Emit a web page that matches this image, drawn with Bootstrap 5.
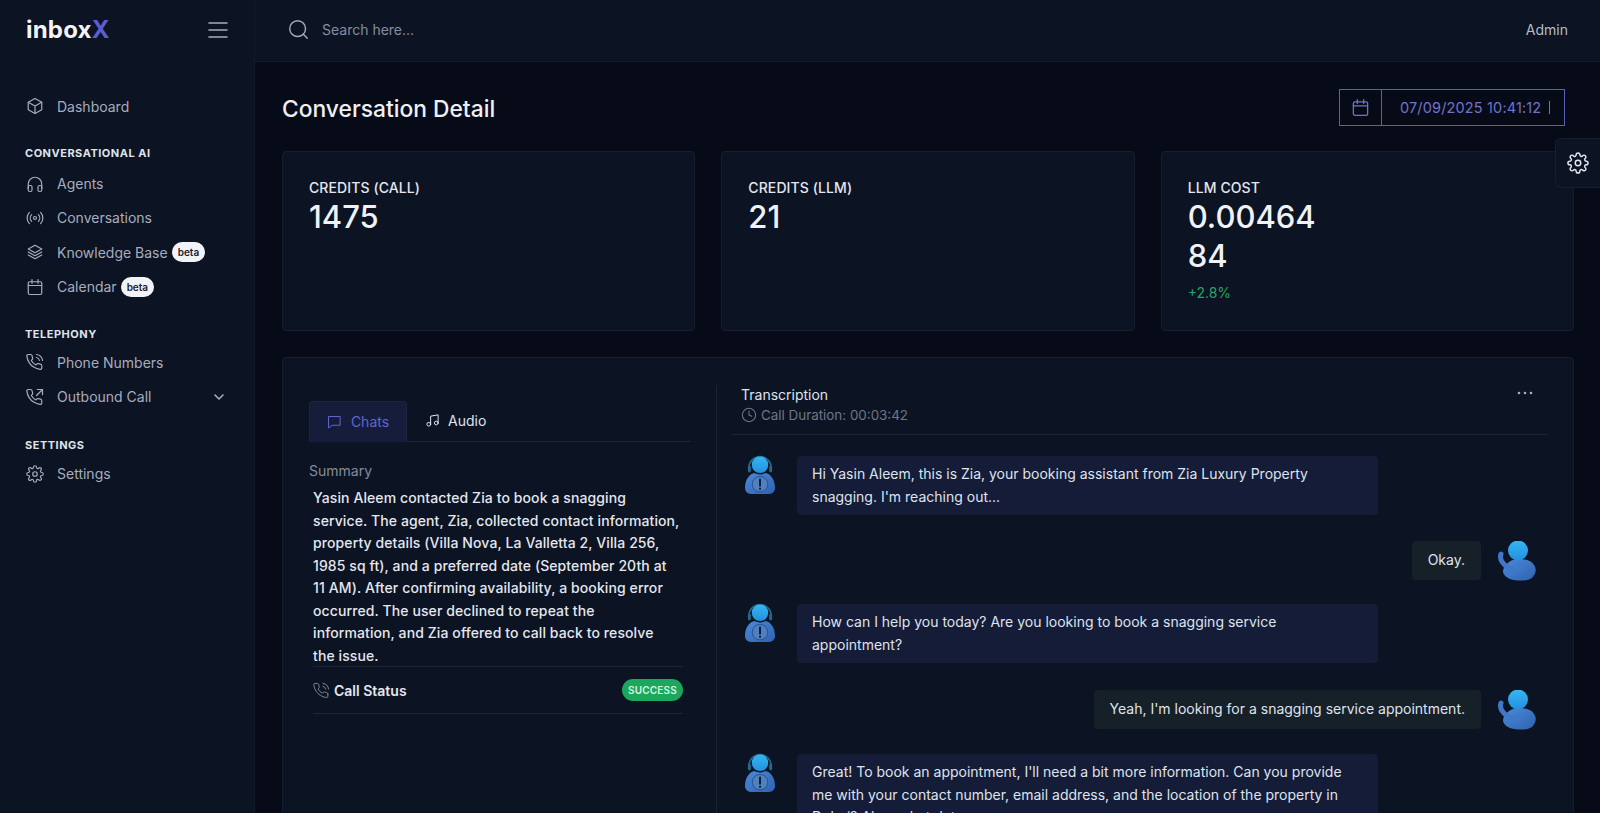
<!DOCTYPE html>
<html lang="en">
<head>
  <meta charset="UTF-8">
  <title>Conversation Detail</title>
  <meta name="viewport" content="width=device-width, initial-scale=1">
  <link href="https://cdn.jsdelivr.net/npm/bootstrap@5.3.3/dist/css/bootstrap.min.css" rel="stylesheet">
  <style>
    html, body {
      height: 100%;
      overflow: hidden;
    }
    body {
      background-color: #070b18;
      color: #e4e7ef;
      font-family: Inter, "Noto Sans", sans-serif;
      font-size: 14px;
    }
    svg.ico {
      fill: none;
      stroke: currentColor;
      stroke-width: 1.6;
      stroke-linecap: round;
      stroke-linejoin: round;
      flex: none;
    }
    .side-panel {
      width: 255px;
      flex: none;
      height: 813px;
      background-color: #0c1323;
      border-right: 1px solid #131a2b;
    }
    .side-top {
      height: 62px;
      padding: 0 26px 2px 26px;
    }
    .brand-text {
      font-size: 24px;
      font-weight: 700;
      color: #f2f4f8;
      letter-spacing: .2px;
    }
    .brand-text span {
      color: #5a5fd0;
    }
    .side-nav {
      padding: 27px 25px 0 26px;
    }
    .side-link {
      height: 34.4px;
      color: #a6adbe;
      gap: 13px;
    }
    .side-head {
      font-size: 11px;
      font-weight: 700;
      letter-spacing: .5px;
      color: #dfe3ec;
      height: 16px;
      line-height: 16px;
      margin-left: -1px;
    }
    .beta-pill {
      background-color: #f1f3f7;
      color: #1b2130;
      font-size: 10px;
      font-weight: 600;
      border-radius: 10px;
      padding: 3px 6px;
      line-height: 14px;
      margin-left: -9px;
    }
    .chev-end {
      margin-right: 4px;
    }
    .top-strip {
      height: 62px;
      background-color: #0c1323;
      border-bottom: 1px solid #131a2b;
      padding: 0 32px 2px 33px;
    }
    .search-hint {
      color: #868d9e;
      margin-left: 13px;
    }
    .admin-name {
      color: #b6bbc8;
    }
    .page-area {
      padding: 27px 26px 0 27px;
    }
    .page-title {
      font-size: 22.800px;
      font-weight: 500;
      color: #eef0f5;
      margin: 0;
      padding-top: 2px;
    }
    .date-box {
      border: 1px solid #5a60b8;
      height: 37px;
      margin-right: 9px;
      color: #6f74c8;
    }
    .date-icon {
      width: 42px;
      border-right: 1px solid #5a60b8;
    }
    .date-value {
      width: 182px;
      padding-left: 18px;
      font-size: 14.500px;
      letter-spacing: .15px;
    }
    .date-caret {
      display: inline-block;
      width: 1px;
      height: 13px;
      margin-left: 8px;
      background-color: #6f74c8;
      vertical-align: -1px;
    }
    .gear-tab {
      position: absolute;
      top: 138px;
      right: 0;
      width: 45px;
      height: 50px;
      background-color: #0c1323;
      border: 1px solid #161e30;
      border-right: 0;
      border-radius: 6px 0 0 6px;
      color: #e4e7ef;
    }
    .stat-row {
      display: grid;
      grid-template-columns: repeat(3, 1fr);
      gap: 26px;
      margin-top: 25px;
    }
    .stat-box {
      height: 180px;
      background-color: #0c1323;
      border: 1px solid #161e30;
      border-radius: 4px;
      padding: 26px 26px 0;
    }
    .stat-label {
      font-size: 14px;
      font-weight: 500;
      line-height: 19px;
      letter-spacing: .1px;
      color: #e4e7ef;
    }
    .stat-value {
      margin-top: 1px;
      font-size: 31px;
      font-weight: 500;
      line-height: 38.500px;
      color: #f0f2f6;
      width: 140px;
      word-break: break-all;
    }
    .stat-delta {
      color: #25a565;
      margin-top: 7px;
      font-size: 14px;
    }
    .detail-box {
      margin-top: 26px;
      height: 600px;
      background-color: #0c1323;
      border: 1px solid #161e30;
      border-radius: 4px 4px 0 0;
      padding: 27px 26px 0;
    }
    .left-pane {
      width: 408px;
      flex: none;
      padding-right: 25px;
      border-right: 1px solid #1a2234;
      height: 500px;
    }
    .tab-line {
      border-bottom: 1px solid #1c2436;
      margin-top: 16px;
      height: 41px;
    }
    .tab-active {
      width: 98px;
      height: 41px;
      padding-bottom: 2px;
      background-color: #151d3a;
      border: 1px solid #1c2540;
      border-bottom: 0;
      border-radius: 4px 4px 0 0;
      color: #5f66cf;
      gap: 9px;
    }
    .tab-plain {
      height: 41px;
      padding: 0 0 2px 18px;
      color: #dfe3ec;
      gap: 8px;
    }
    .summary-label {
      margin-top: 20px;
      color: #858c9c;
      line-height: 18px;
    }
    .summary-text {
      margin: 7px 0 0;
      padding: 0 0 0 4px;
      font-weight: 500;
      letter-spacing: .1px;
      line-height: 22.500px;
      white-space: nowrap;
      color: #e4e7ef;
    }
    .status-row {
      margin: -1px 8px 0 4px;
      height: 48px;
      border-top: 1px solid #1c2436;
      border-bottom: 1px solid #1c2436;
      color: #e4e7ef;
      font-weight: 600;
    }
    .status-pill {
      background-color: #1aa85c;
      color: #d5f3e2;
      font-size: 10px;
      font-weight: 600;
      letter-spacing: .2px;
      border-radius: 11px;
      padding: 4px 6px;
      line-height: 14px;
    }
    .right-pane {
      padding-left: 14px;
      flex-grow: 1;
      min-width: 0;
    }
    .trans-head {
      padding: 0 14px 9px 10px;
      border-bottom: 1px solid #1a2234;
    }
    .trans-title {
      line-height: 20px;
      color: #dfe3ec;
    }
    .trans-sub {
      color: #6f7686;
      font-size: 13.400px;
      line-height: 20px;
      gap: 4px;
    }
    .chat-line {
      gap: 21px;
      padding: 0 10px 0 14px;
    }
    .chat-line.is-user {
      gap: 16px;
    }
    .bot-face {
      margin-top: -2px;
      flex: none;
    }
    .chat-bubble {
      background-color: #141c38;
      border-radius: 4px;
      padding: 7px 15px;
      line-height: 22.500px;
      width: 581px;
      color: #dfe3ec;
    }
    .chat-bubble.from-user {
      background-color: #162029;
      width: auto;
      padding: 8px 16px;
    }
  </style>
</head>
<body>
  <svg width="0" height="0" class="d-block">
    <defs>
      <linearGradient id="headFill" x1="0" y1="0" x2="0" y2="1">
        <stop offset="0" stop-color="#35b6f2"/>
        <stop offset="1" stop-color="#2390e0"/>
      </linearGradient>
      <linearGradient id="bodyFill" x1="0" y1="0" x2="1" y2="1">
        <stop offset="0" stop-color="#4a8ad8"/>
        <stop offset="1" stop-color="#2f62b0"/>
      </linearGradient>
      <symbol id="botFace" viewBox="0 0 32 42">
        <path d="M4 14a11.500 11.500 0 0 1 23 0" fill="none" stroke="#24688c" stroke-width="1.800"/>
        <rect x="3" y="12" width="3" height="7" rx="1.500" fill="#24688c"/>
        <rect x="25" y="12" width="3" height="7" rx="1.500" fill="#24688c"/>
        <circle cx="15.500" cy="11" r="8.500" fill="url(#headFill)"/>
        <path d="M0 35c0-9 5-15 10-15.500 3 2 8 2 11 0 5 .5 10 6.500 10 15.500 0 4-3 6-6 6H6c-3 0-6-2-6-6z" fill="url(#bodyFill)"/>
        <circle cx="15.500" cy="31" r="8" fill="#4f80c0" stroke="#2b4f88"/>
        <path d="M15.500 26v6.500M15.500 35.500v.5" stroke="#0f1b33" stroke-width="2" stroke-linecap="round"/>
      </symbol>
      <symbol id="userFace" viewBox="0 0 40 40">
        <path d="M9 24c3-4 8-6 13-6 6 0 12 1 15 6 3 4 2 9-2 13-5 3-12 3-18 2-6-1-10-4-11-8 0-3 1-5 3-7z" fill="url(#bodyFill)"/>
        <path d="M4 13c-2 5 2 11 8 14l10 2" fill="none" stroke="#3f78c8" stroke-width="5" stroke-linecap="round"/>
        <circle cx="21" cy="9.500" r="10" fill="url(#headFill)"/>
      </symbol>
    </defs>
  </svg>

  <div class="d-flex">
    <aside class="side-panel">
      <div class="side-top d-flex align-items-center justify-content-between">
        <div class="brand-text">inbox<span>X</span></div>
        <svg class="ico" width="20" height="20" viewBox="0 0 20 20" style="color:#a6adbe"><path d="M1 3h18M1 10h18M1 17h18"/></svg>
      </div>
      <nav class="side-nav">
        <div class="side-link d-flex align-items-center">
          <svg class="ico" width="18" height="18" viewBox="0 0 24 24"><path d="M12 2l9 5v10l-9 5-9-5V7z"/><path d="M3 7l9 5 9-5M12 12v10"/></svg>
          <span>Dashboard</span>
        </div>
        <div class="side-head" style="margin-top:22px">CONVERSATIONAL AI</div>
        <div class="side-link d-flex align-items-center" style="margin-top:5px">
          <svg class="ico" width="18" height="18" viewBox="0 0 24 24"><path d="M3 18v-6a9 9 0 0 1 18 0v6"/><rect x="3" y="14" width="5" height="8" rx="2"/><rect x="16" y="14" width="5" height="8" rx="2"/></svg>
          <span>Agents</span>
        </div>
        <div class="side-link d-flex align-items-center">
          <svg class="ico" width="18" height="18" viewBox="0 0 24 24"><circle cx="12" cy="12" r="2"/><path d="M7.500 7.500a6.500 6.500 0 0 0 0 9M16.500 7.500a6.500 6.500 0 0 1 0 9M4.500 4.500a11 11 0 0 0 0 15M19.500 4.500a11 11 0 0 1 0 15"/></svg>
          <span>Conversations</span>
        </div>
        <div class="side-link d-flex align-items-center">
          <svg class="ico" width="18" height="18" viewBox="0 0 24 24"><path d="M12 3l9 5-9 5-9-5z"/><path d="M3 12l9 5 9-5M3 16l9 5 9-5"/></svg>
          <span>Knowledge Base</span>
          <span class="beta-pill">beta</span>
        </div>
        <div class="side-link d-flex align-items-center">
          <svg class="ico" width="18" height="18" viewBox="0 0 24 24"><rect x="3" y="5" width="18" height="17" rx="2"/><path d="M3 10h18M8 2v5M16 2v5"/></svg>
          <span>Calendar</span>
          <span class="beta-pill">beta</span>
        </div>
        <div class="side-head" style="margin-top:22px">TELEPHONY</div>
        <div class="side-link d-flex align-items-center" style="margin-top:3px">
          <svg class="ico" width="18" height="18" viewBox="0 0 24 24"><path d="M21 16.900v3a2 2 0 0 1-2.200 2 19.800 19.800 0 0 1-8.600-3.100 19.500 19.500 0 0 1-6-6A19.800 19.800 0 0 1 1.100 4.200 2 2 0 0 1 3.100 2h3a2 2 0 0 1 2 1.700c.1 1 .4 1.900.7 2.800a2 2 0 0 1-.5 2.100L7.100 9.900a16 16 0 0 0 6 6l1.300-1.300a2 2 0 0 1 2.100-.4c.9.300 1.800.6 2.800.7a2 2 0 0 1 1.700 2zM14 6a5 5 0 0 1 4 4M14 2a9 9 0 0 1 8 8"/></svg>
          <span>Phone Numbers</span>
        </div>
        <div class="side-link d-flex align-items-center">
          <svg class="ico" width="18" height="18" viewBox="0 0 24 24"><path d="M21 16.900v3a2 2 0 0 1-2.200 2 19.800 19.800 0 0 1-8.600-3.100 19.500 19.500 0 0 1-6-6A19.800 19.800 0 0 1 1.100 4.200 2 2 0 0 1 3.100 2h3a2 2 0 0 1 2 1.700c.1 1 .4 1.900.7 2.800a2 2 0 0 1-.5 2.100L7.100 9.900a16 16 0 0 0 6 6l1.300-1.300a2 2 0 0 1 2.100-.4c.9.300 1.800.6 2.800.7a2 2 0 0 1 1.700 2zM15 2h7v7M22 2l-8 8"/></svg>
          <span class="flex-grow-1">Outbound Call</span>
          <svg class="ico chev-end" width="12" height="12" viewBox="0 0 12 12"><path d="M2 4l4 4 4-4"/></svg>
        </div>
        <div class="side-head" style="margin-top:23px">SETTINGS</div>
        <div class="side-link d-flex align-items-center" style="margin-top:4px">
          <svg class="ico" width="18" height="18" viewBox="0 0 24 24"><circle cx="12" cy="12" r="3"/><path d="M19.400 15a1.700 1.700 0 0 0 .3 1.800l.1.100a2 2 0 1 1-2.800 2.800l-.1-.1a1.700 1.700 0 0 0-2.900 1.200V21a2 2 0 1 1-4 0v-.1a1.700 1.700 0 0 0-2.900-1.200l-.1.100a2 2 0 1 1-2.800-2.800l.1-.1a1.700 1.700 0 0 0-1.200-2.900H3a2 2 0 1 1 0-4h.1a1.700 1.700 0 0 0 1.200-2.900l-.1-.1a2 2 0 1 1 2.800-2.800l.1.100a1.700 1.700 0 0 0 1.900.3H9a1.700 1.700 0 0 0 1-1.500V3a2 2 0 1 1 4 0v.1a1.700 1.700 0 0 0 2.900 1.200l.1-.1a2 2 0 1 1 2.800 2.800l-.1.100a1.700 1.700 0 0 0-.3 1.900V9a1.700 1.700 0 0 0 1.500 1H21a2 2 0 1 1 0 4h-.1a1.700 1.700 0 0 0-1.500 1z"/></svg>
          <span>Settings</span>
        </div>
      </nav>
    </aside>

    <div class="flex-grow-1">
      <header class="top-strip d-flex align-items-center">
        <svg class="ico" width="21" height="21" viewBox="0 0 24 24" style="color:#a6adbe"><circle cx="11" cy="11" r="9"/><path d="M22 22l-4.500-4.500"/></svg>
        <span class="search-hint flex-grow-1">Search here...</span>
        <span class="admin-name">Admin</span>
      </header>

      <main class="page-area">
        <div class="d-flex align-items-center justify-content-between">
          <h1 class="page-title">Conversation Detail</h1>
          <div class="date-box d-flex align-items-center">
            <div class="date-icon d-flex align-items-center justify-content-center h-100">
              <svg class="ico" width="19" height="19" viewBox="0 0 24 24"><rect x="3" y="5" width="18" height="17" rx="2"/><path d="M3 10h18M8 2v5M16 2v5"/></svg>
            </div>
            <div class="date-value">07/09/2025 10:41:12<span class="date-caret"></span></div>
          </div>
        </div>

        <div class="stat-row">
          <div class="stat-box">
            <div class="stat-label">CREDITS (CALL)</div>
            <div class="stat-value">1475</div>
          </div>
          <div class="stat-box">
            <div class="stat-label">CREDITS (LLM)</div>
            <div class="stat-value">21</div>
          </div>
          <div class="stat-box">
            <div class="stat-label">LLM COST</div>
            <div class="stat-value">0.0046484</div>
            <div class="stat-delta">+2.8%</div>
          </div>
        </div>

        <div class="detail-box d-flex">
          <section class="left-pane">
            <div class="tab-line d-flex">
              <div class="tab-active d-flex align-items-center justify-content-center">
                <svg class="ico" width="15" height="15" viewBox="0 0 24 24"><path d="M3 4h18v14H8l-5 4z"/></svg>
                <span>Chats</span>
              </div>
              <div class="tab-plain d-flex align-items-center">
                <svg class="ico" width="15" height="15" viewBox="0 0 24 24"><path d="M9 18V5l12-2v13"/><circle cx="6" cy="18" r="3"/><circle cx="18" cy="16" r="3"/></svg>
                <span>Audio</span>
              </div>
            </div>
            <div class="summary-label">Summary</div>
            <p class="summary-text">Yasin Aleem contacted Zia to book a snagging<br>service. The agent, Zia, collected contact information,<br>property details (Villa Nova, La Valletta 2, Villa 256,<br>1985 sq ft), and a preferred date (September 20th at<br>11 AM). After confirming availability, a booking error<br>occurred. The user declined to repeat the<br>information, and Zia offered to call back to resolve<br>the issue.</p>
            <div class="status-row d-flex align-items-center">
              <svg class="ico" width="17" height="17" viewBox="0 0 24 24" style="color:#868d9e;stroke-width:1.300"><path d="M21 16.900v3a2 2 0 0 1-2.200 2 19.800 19.800 0 0 1-8.600-3.100 19.500 19.500 0 0 1-6-6A19.800 19.800 0 0 1 1.100 4.200 2 2 0 0 1 3.100 2h3a2 2 0 0 1 2 1.700c.1 1 .4 1.900.7 2.800a2 2 0 0 1-.5 2.100L7.100 9.900a16 16 0 0 0 6 6l1.300-1.300a2 2 0 0 1 2.100-.4c.9.300 1.800.6 2.800.7a2 2 0 0 1 1.700 2zM14 6a5 5 0 0 1 4 4M14 2a9 9 0 0 1 8 8"/></svg>
              <span class="flex-grow-1 ms-1">Call Status</span>
              <span class="status-pill">SUCCESS</span>
            </div>
          </section>

          <section class="right-pane">
            <div class="trans-head d-flex justify-content-between">
              <div>
                <div class="trans-title">Transcription</div>
                <div class="trans-sub d-flex align-items-center">
                  <svg class="ico" width="16" height="16" viewBox="0 0 24 24"><circle cx="12" cy="12" r="10"/><path d="M12 6v6l4 2"/></svg>
                  <span>Call Duration: 00:03:42</span>
                </div>
              </div>
              <svg width="16" height="16" viewBox="0 0 16 16" fill="#a6adbe"><circle cx="2" cy="8" r="1.300"/><circle cx="8" cy="8" r="1.300"/><circle cx="14" cy="8" r="1.300"/></svg>
            </div>

            <div class="chat-line d-flex" style="margin-top:21px">
              <svg class="bot-face" width="31" height="41"><use href="#botFace"/></svg>
              <div class="chat-bubble">Hi Yasin Aleem, this is Zia, your booking assistant from Zia Luxury Property snagging. I'm reaching out...</div>
            </div>
            <div class="chat-line is-user d-flex justify-content-end align-items-start" style="margin-top:26px">
              <div class="chat-bubble from-user">Okay.</div>
              <svg width="40" height="40"><use href="#userFace"/></svg>
            </div>
            <div class="chat-line d-flex" style="margin-top:23px">
              <svg class="bot-face" width="31" height="41"><use href="#botFace"/></svg>
              <div class="chat-bubble">How can I help you today? Are you looking to book a snagging service appointment?</div>
            </div>
            <div class="chat-line is-user d-flex justify-content-end align-items-start" style="margin-top:27px">
              <div class="chat-bubble from-user">Yeah, I'm looking for a snagging service appointment.</div>
              <svg width="40" height="40"><use href="#userFace"/></svg>
            </div>
            <div class="chat-line d-flex" style="margin-top:24px">
              <svg class="bot-face" width="31" height="41"><use href="#botFace"/></svg>
              <div class="chat-bubble">Great! To book an appointment, I'll need a bit more information. Can you provide me with your contact number, email address, and the location of the property in Dubai? Also, what date...</div>
            </div>
          </section>
        </div>
      </main>
    </div>
  </div>

  <div class="gear-tab d-flex align-items-center justify-content-center">
    <svg class="ico" width="22" height="22" viewBox="0 0 24 24"><circle cx="12" cy="12" r="3"/><path d="M19.400 15a1.700 1.700 0 0 0 .3 1.800l.1.100a2 2 0 1 1-2.800 2.800l-.1-.1a1.700 1.700 0 0 0-2.900 1.200V21a2 2 0 1 1-4 0v-.1a1.700 1.700 0 0 0-2.900-1.200l-.1.100a2 2 0 1 1-2.800-2.800l.1-.1a1.700 1.700 0 0 0-1.200-2.900H3a2 2 0 1 1 0-4h.1a1.700 1.700 0 0 0 1.200-2.900l-.1-.1a2 2 0 1 1 2.800-2.800l.1.100a1.700 1.700 0 0 0 1.900.3H9a1.700 1.700 0 0 0 1-1.500V3a2 2 0 1 1 4 0v.1a1.700 1.700 0 0 0 2.900 1.200l.1-.1a2 2 0 1 1 2.800 2.800l-.1.100a1.700 1.700 0 0 0-.3 1.900V9a1.700 1.700 0 0 0 1.500 1H21a2 2 0 1 1 0 4h-.1a1.700 1.700 0 0 0-1.500 1z"/></svg>
  </div>

  <script src="https://cdn.jsdelivr.net/npm/bootstrap@5.3.3/dist/js/bootstrap.bundle.min.js"></script>
</body>
</html>
